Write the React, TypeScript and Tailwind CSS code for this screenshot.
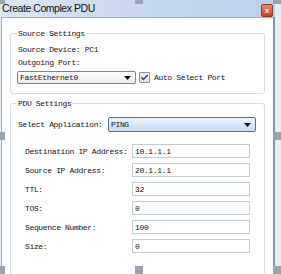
import { Check } from 'lucide-react';

const mono = "font-['Liberation_Mono',monospace] text-[8px] tracking-[-0.35px] text-[#111]";

const Field = ({ label, value }: { label: string; value: string }) => (
  <div className="flex items-center h-[14px]">
    <span className="w-[107px] shrink-0">{label}</span>
    <div className="w-[118px] h-[14px] border border-[#c3cbd3] bg-white flex items-center pl-[2px]">{value}</div>
  </div>
);

const Arrow = () => (
  <svg width="7" height="4" viewBox="0 0 7 4" className="ml-auto mr-[4px]">
    <path d="M0 0 H7 L3.5 4 Z" fill="#111" />
  </svg>
);

const Handle = ({ cls }: { cls: string }) => <div className={`absolute w-[8px] h-[8px] bg-[#9aa4ae] ${cls}`} />;

export default function App() {
  return (
    <div className="relative w-[281px] h-[274px] overflow-hidden bg-[#e4eef9]">
      <div className="flex flex-col w-[275px] h-full">
        {/* title bar */}
        <div className="h-[18px] flex items-center bg-gradient-to-r from-[#dbe7f5] via-[#c6d8ee] to-[#bcd0ea]">
          <span className="pl-[2px] pt-[1px] font-['Liberation_Sans',sans-serif] text-[10.5px] tracking-[-0.45px] text-[#111]">Create Complex PDU</span>
          <div className="ml-auto mr-[2px] mt-[4px] w-[12px] h-[13px] rounded-[2px] bg-gradient-to-b from-[#e98a6c] to-[#c4432b] border border-[#9b3a25] flex items-center justify-center text-white text-[7px] leading-none font-bold font-['Liberation_Sans',sans-serif]">x</div>
        </div>

        {/* body */}
        <div className={`flex-1 ml-[1px] bg-white border-t border-t-[#a3adb8] border-l border-l-[#9aa9ba] border-r-2 border-r-[#8b949e] px-[8px] pt-[15px] ${mono}`}>
          {/* Source Settings */}
          <div className="relative border border-[#d6dde4] rounded-[3px] pl-[7px] pt-[9px] pb-[9px] leading-[13px]">
            <span className="absolute -top-[7px] left-[6px] bg-white px-[1px]">Source Settings</span>
            <div>Source Device: PC1</div>
            <div>Outgoing Port:</div>
            <div className="flex items-center mt-[2px]">
              <div className="-ml-[1px] w-[119px] h-[13px] border border-[#828282] rounded-[2px] bg-gradient-to-b from-[#fdfdfd] to-[#ececec] flex items-center pl-[2px]">
                FastEthernet0
                <Arrow />
              </div>
              <div className="ml-[3px] w-[11px] h-[11px] border border-[#8e8f8f] rounded-[1px] bg-gradient-to-b from-[#f3f7fb] to-[#dfe8f2] flex items-center justify-center">
                <Check className="w-[9px] h-[9px] text-[#2c4c8c]" strokeWidth={4} />
              </div>
              <span className="ml-[4px]">Auto Select Port</span>
            </div>
          </div>

          {/* PDU Settings */}
          <div className="relative mt-[9px] h-[200px] border border-[#d6dde4] rounded-[3px] pl-[7px] pt-[13px] leading-[13px]">
            <span className="absolute -top-[7px] left-[6px] bg-white px-[1px]">PDU Settings</span>
            <div className="flex items-center">
              <span className="w-[90px] shrink-0">Select Application:</span>
              <div className="w-[148px] h-[15px] border border-[#5f6e7e] rounded-[2px] bg-gradient-to-b from-[#eaf3fc] to-[#c8dcf1] flex items-center pl-[2px]">
                PING
                <Arrow />
              </div>
            </div>
            <div className="flex flex-col gap-[5px] mt-[12px] pl-[7px]">
              <Field label="Destination IP Address:" value="10.1.1.1" />
              <Field label="Source IP Address:" value="20.1.1.1" />
              <Field label="TTL:" value="32" />
              <Field label="TOS:" value="0" />
              <Field label="Sequence Number:" value="100" />
              <Field label="Size:" value="0" />
            </div>
          </div>
        </div>
      </div>

      {/* selection handles */}
      <Handle cls="-left-[3px] -top-[4px]" />
      <Handle cls="left-[135px] -top-[4px]" />
      <Handle cls="left-[273px] -top-[4px]" />
      <Handle cls="-left-[3px] top-[132px]" />
      <Handle cls="left-[273px] top-[132px]" />
      <Handle cls="-left-[3px] top-[266px]" />
      <Handle cls="left-[135px] top-[266px]" />
      <Handle cls="left-[273px] top-[266px]" />
    </div>
  );
}
